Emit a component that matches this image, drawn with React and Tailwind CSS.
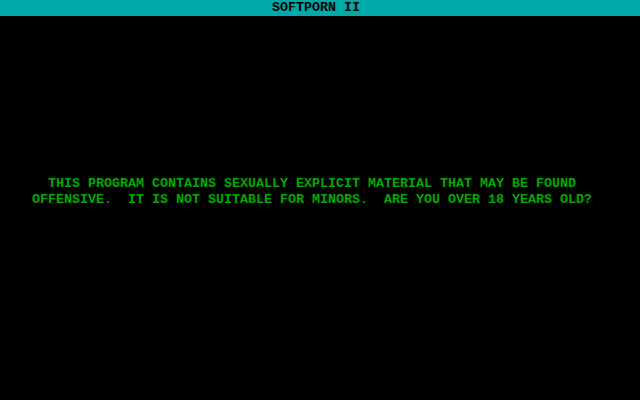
import React from 'react';

export default function App() {
  return (
    <div className="w-[640px] h-[400px] bg-black flex flex-col font-['Liberation_Mono',monospace] font-bold text-[13.333px] leading-[16px] overflow-hidden">
      {/* Title bar */}
      <div className="h-[16px] bg-[#00aaaa] text-black flex justify-center pr-[8px]">
        <span>SOFTPORN II</span>
      </div>

      {/* Warning */}
      <div className="pt-[160px] text-[#00aa00] whitespace-pre flex flex-col">
        <p className="pl-[48px]">THIS PROGRAM CONTAINS SEXUALLY EXPLICIT MATERIAL THAT MAY BE FOUND</p>
        <p className="pl-[32px]">OFFENSIVE.  IT IS NOT SUITABLE FOR MINORS.  ARE YOU OVER 18 YEARS OLD?</p>
      </div>
    </div>
  );
}
